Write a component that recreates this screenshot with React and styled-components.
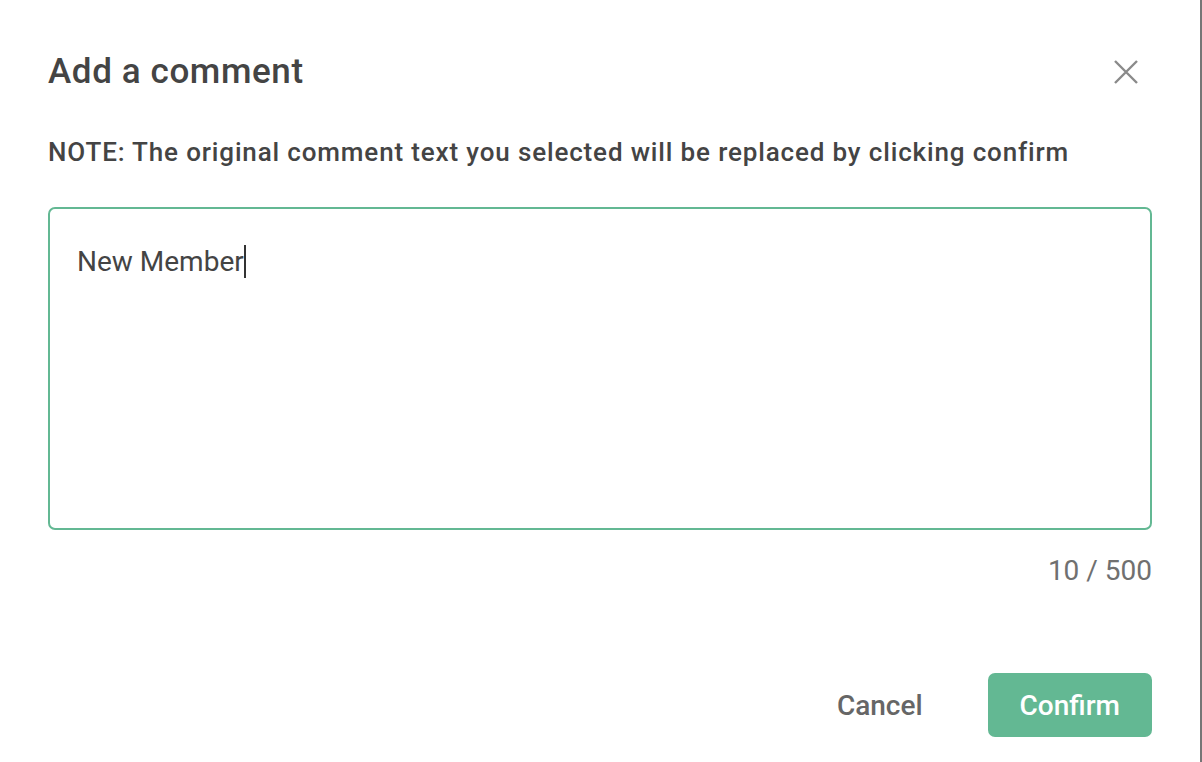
import React from "react"
import styled, { createGlobalStyle } from "styled-components"

const GlobalStyle = createGlobalStyle`
  html, body {
    margin: 0;
    padding: 0;
    background: #767676;
  }
  body {
    font-family: Roboto, "Liberation Sans", sans-serif;
    overflow: hidden;
  }
  * {
    box-sizing: border-box;
  }
`

const Dialog = styled.div`
  width: 1200px;
  height: 762px;
  background: #ffffff;
  padding: 48px 48px 0 48px;
  display: flex;
  flex-direction: column;
`

const Header = styled.div`
  height: 48px;
  display: flex;
  align-items: center;
  justify-content: space-between;
`

const Title = styled.h2`
  margin: 0;
  font-size: 35px;
  font-weight: 500;
  letter-spacing: 0.6px;
  line-height: 48px;
  color: #444444;
`

const CloseButton = styled.button`
  width: 24px;
  height: 24px;
  margin-right: 14px;
  padding: 0;
  border: none;
  background: none;
  display: flex;
  align-items: center;
  justify-content: center;
  cursor: pointer;
`

const Note = styled.p`
  margin: 40px 0 0 0;
  font-size: 26px;
  font-weight: 500;
  letter-spacing: 0.85px;
  line-height: 32px;
  color: #444444;
  white-space: nowrap;
`

const Field = styled.div`
  margin-top: 39px;
  height: 323px;
  border: 2px solid #63b893;
  border-radius: 7px;
  padding: 35px 27px;
  font-size: 28px;
  line-height: 36px;
  color: #444444;
`

const Caret = styled.span`
  display: inline-block;
  width: 2px;
  height: 33px;
  background: #333333;
  vertical-align: -7px;
`

const Counter = styled.div`
  margin-top: 23px;
  text-align: right;
  font-size: 28px;
  line-height: 36px;
  color: #707070;
`

const Footer = styled.div`
  margin-top: 84px;
  display: flex;
  align-items: center;
  justify-content: flex-end;
  gap: 65px;
`

const ActionButton = styled.button`
  font-family: inherit;
  font-size: 28px;
  font-weight: 500;
  border: none;
  cursor: pointer;
  border-radius: 7px;
  height: 64px;
  padding: ${(p) => (p.primary ? "0 32px" : "0")};
  min-width: ${(p) => (p.primary ? "164px" : "0")};
  background: ${(p) => (p.primary ? "#63b893" : "transparent")};
  color: ${(p) => (p.primary ? "#ffffff" : "#666666")};
`

const CloseIcon = () => (
  <svg width="24" height="24" viewBox="0 0 24 24">
    <path d="M1 1 L23 23 M23 1 L1 23" stroke="#8a8a8a" strokeWidth="2.4" fill="none" />
  </svg>
)

export default function App() {
  return (
    <>
      <GlobalStyle />
      <Dialog>
        <Header>
          <Title>Add a comment</Title>
          <CloseButton aria-label="Close">
            <CloseIcon />
          </CloseButton>
        </Header>
        <Note>NOTE: The original comment text you selected will be replaced by clicking confirm</Note>
        <Field>
          New Member<Caret />
        </Field>
        <Counter>10 / 500</Counter>
        <Footer>
          <ActionButton>Cancel</ActionButton>
          <ActionButton primary>Confirm</ActionButton>
        </Footer>
      </Dialog>
    </>
  )
}
